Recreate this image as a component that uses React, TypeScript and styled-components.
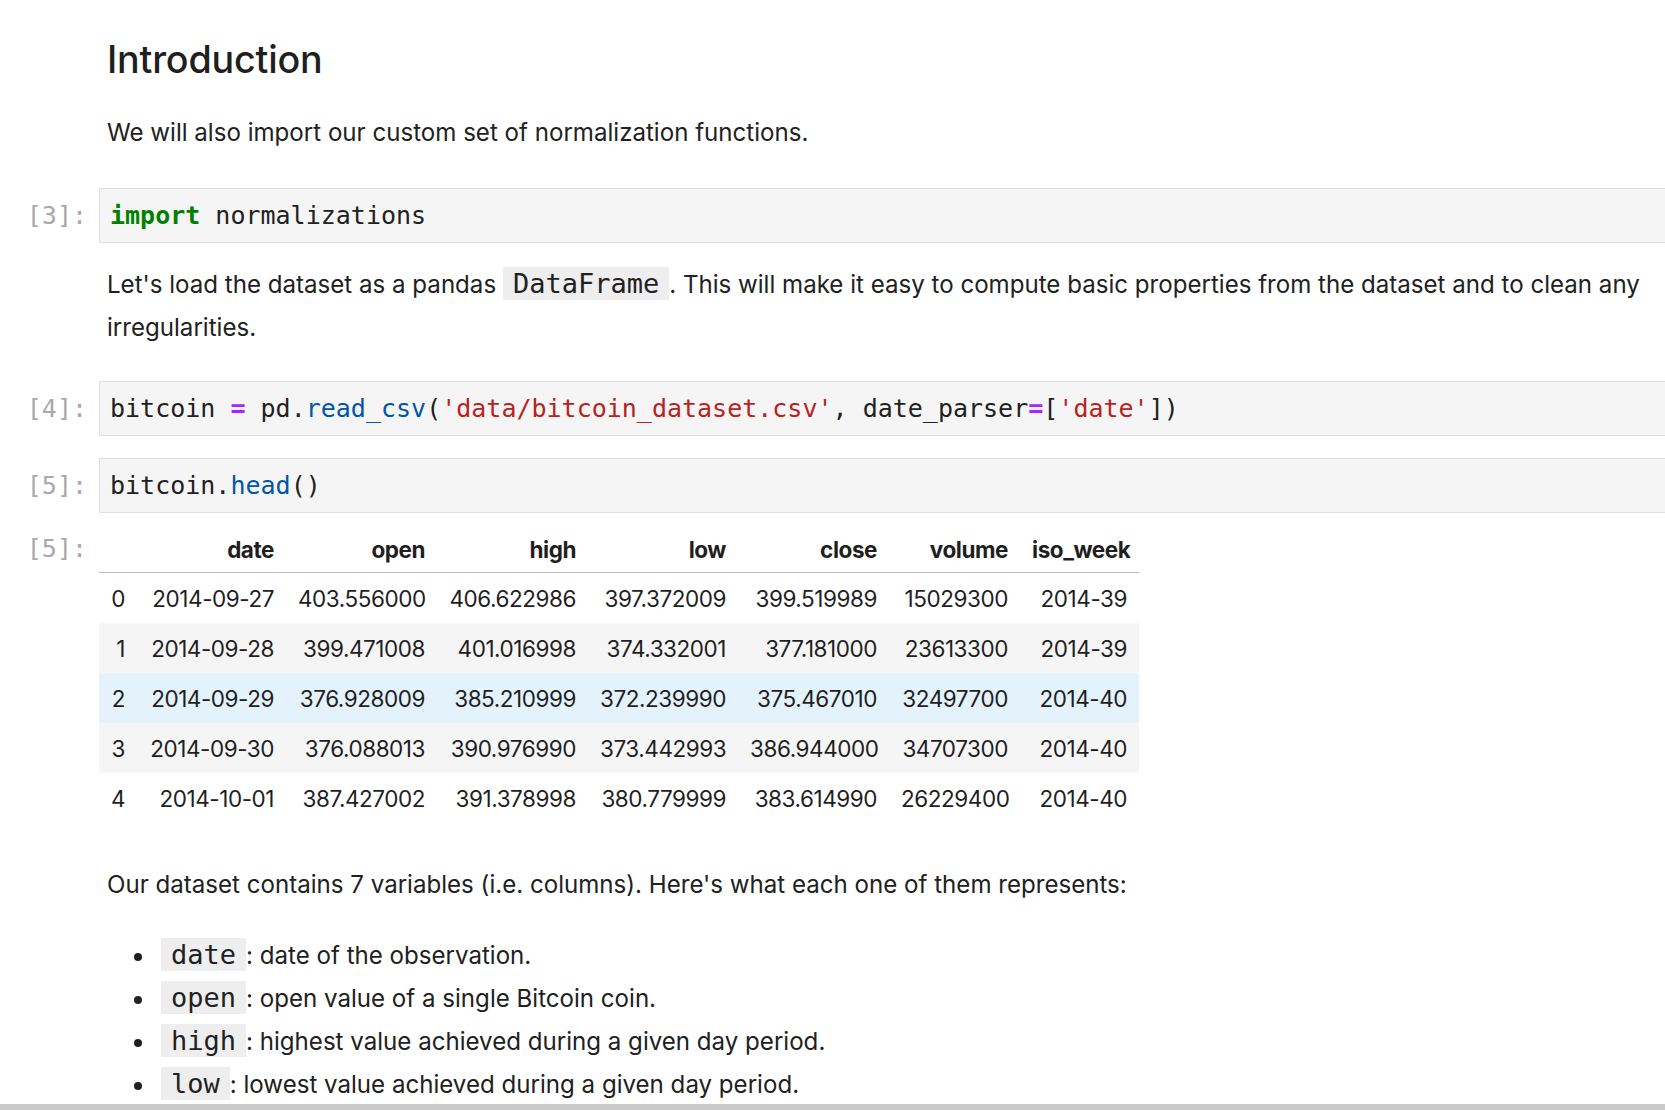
import React from "react";
import styled, { createGlobalStyle } from "styled-components";

const GlobalStyle = createGlobalStyle`
  html, body { margin: 0; padding: 0; background: #ffffff; }
  body {
    font-family: Inter, "Liberation Sans", Arial, sans-serif;
    color: #212121;
    -webkit-font-smoothing: antialiased;
  }
`;

const MONO = `"DejaVu Sans Mono", "Liberation Mono", monospace`;

const Page = styled.div`
  height: 1110px;
  display: flex;
  flex-direction: column;
  overflow: hidden;
`;

const Notebook = styled.main`
  flex: 1;
  width: 1720px;
  overflow: hidden;
  padding-top: 36px;
  box-sizing: border-box;
`;

const ScrollBar = styled.div`
  flex: none;
  height: 6px;
  background: #c9c9c9;
`;

const Cell = styled.section<{ $gap: number; $align?: string }>`
  display: flex;
  align-items: ${(p) => p.$align || "flex-start"};
  margin-top: ${(p) => p.$gap}px;
`;

const Prompt = styled.div<{ $lh?: number }>`
  flex: none;
  width: 99px;
  box-sizing: border-box;
  padding-right: 12px;
  text-align: right;
  font-family: ${MONO};
  font-size: 25px;
  line-height: ${(p) => p.$lh || 31}px;
  color: #a9a9a9;
  white-space: pre;
`;

const Markdown = styled.div`
  flex: 1;
  padding-left: 8px;
`;

const Heading = styled.h2`
  margin: 0;
  font-size: 37.7px;
  font-weight: 500;
  line-height: 47px;
  letter-spacing: -0.2px;
  color: #1f1f1f;
`;

const Para = styled.p`
  margin: 0;
  font-size: 24.1px;
  line-height: 43px;
`;

const InlineCode = styled.code`
  font-family: ${MONO};
  font-size: 27px;
  line-height: 1;
  padding: 1px 10px;
  background: #eeeeee;
  color: #212121;
`;

const CodeBox = styled.div`
  flex: 1;
  background: #f5f5f5;
  border: 1px solid #e0e0e0;
  padding: 11px 10px;
  font-family: ${MONO};
  font-size: 25px;
  line-height: 31px;
  color: #212121;
  white-space: pre;
`;

const Kw = styled.span`
  color: #008000;
  font-weight: bold;
`;
const Op = styled.span`
  color: #aa22ff;
  font-weight: bold;
`;
const Prop = styled.span`
  color: #0055aa;
`;
const Str = styled.span`
  color: #ba2121;
`;

const DataTable = styled.table`
  border-collapse: collapse;
  table-layout: fixed;
  width: 1040px;
  font-size: 22.5px;
  letter-spacing: -0.45px;
  color: #1f1f1f;
`;

const HeadCell = styled.th`
  height: 46px;
  padding: 0 12px;
  text-align: right;
  font-weight: 700;
  vertical-align: middle;
  border-bottom: 1px solid #bdbdbd;
  white-space: nowrap;
`;

const BodyRow = styled.tr<{ $tone: "plain" | "stripe" | "hover" }>`
  height: 50px;
  background: ${(p) =>
    p.$tone === "hover" ? "#e3f2fb" : p.$tone === "stripe" ? "#f5f5f5" : "#ffffff"};
`;

const ValueCell = styled.td`
  padding: 1px 12px 0;
  text-align: right;
  vertical-align: middle;
  white-space: nowrap;
`;

const IndexCell = styled(ValueCell)`
  font-weight: 400;
`;

const List = styled.ul`
  margin: 0;
  padding: 0 0 0 54px;
  list-style: none;
`;

const Item = styled.li`
  font-size: 24.1px;
  line-height: 43px;
  display: flex;
  align-items: baseline;
  white-space: nowrap;
  &::before {
    content: "";
    flex: none;
    align-self: center;
    width: 8px;
    height: 8px;
    border-radius: 50%;
    background: #212121;
    margin-left: -27px;
    margin-right: 19px;
    margin-top: 3px;
  }
`;

const columns = ["", "date", "open", "high", "low", "close", "volume", "iso_week"];
const widths = [38, 149, 151, 151, 150, 151, 131, 119];

const rows: string[][] = [
  ["0", "2014-09-27", "403.556000", "406.622986", "397.372009", "399.519989", "15029300", "2014-39"],
  ["1", "2014-09-28", "399.471008", "401.016998", "374.332001", "377.181000", "23613300", "2014-39"],
  ["2", "2014-09-29", "376.928009", "385.210999", "372.239990", "375.467010", "32497700", "2014-40"],
  ["3", "2014-09-30", "376.088013", "390.976990", "373.442993", "386.944000", "34707300", "2014-40"],
  ["4", "2014-10-01", "387.427002", "391.378998", "380.779999", "383.614990", "26229400", "2014-40"],
];

const tones: Array<"plain" | "stripe" | "hover"> = ["plain", "stripe", "hover", "stripe", "plain"];

const variables = [
  ["date", "date of the observation."],
  ["open", "open value of a single Bitcoin coin."],
  ["high", "highest value achieved during a given day period."],
  ["low", "lowest value achieved during a given day period."],
];

export default function App() {
  return (
    <Page>
      <GlobalStyle />
      <Notebook>
        <Cell $gap={0}>
          <Prompt />
          <Markdown>
            <Heading>Introduction</Heading>
          </Markdown>
        </Cell>
        <Cell $gap={28}>
          <Prompt />
          <Markdown>
            <Para>We will also import our custom set of normalization functions.</Para>
          </Markdown>
        </Cell>
        <Cell $gap={34} $align="center">
          <Prompt>[3]:</Prompt>
          <CodeBox>
            <Kw>import</Kw> normalizations
          </CodeBox>
        </Cell>
        <Cell $gap={20}>
          <Prompt />
          <Markdown>
            <Para>
              Let's load the dataset as a pandas <InlineCode>DataFrame</InlineCode>. This will make it
              easy to compute basic properties from the dataset and to clean any
              <br />
              irregularities.
            </Para>
          </Markdown>
        </Cell>
        <Cell $gap={32} $align="center">
          <Prompt>[4]:</Prompt>
          <CodeBox>
            bitcoin <Op>=</Op> pd.<Prop>read_csv</Prop>(<Str>'data/bitcoin_dataset.csv'</Str>, date_parser
            <Op>=</Op>[<Str>'date'</Str>])
          </CodeBox>
        </Cell>
        <Cell $gap={22} $align="center">
          <Prompt>[5]:</Prompt>
          <CodeBox>
            bitcoin.<Prop>head</Prop>()
          </CodeBox>
        </Cell>
        <Cell $gap={13}>
          <Prompt $lh={46}>[5]:</Prompt>
          <DataTable>
            <colgroup>
              {widths.map((w, i) => (
                <col key={i} style={{ width: w }} />
              ))}
            </colgroup>
            <thead>
              <tr>
                {columns.map((c, i) => (
                  <HeadCell key={i}>{c}</HeadCell>
                ))}
              </tr>
            </thead>
            <tbody>
              {rows.map((r, ri) => (
                <BodyRow key={ri} $tone={tones[ri]}>
                  {r.map((v, ci) =>
                    ci === 0 ? (
                      <IndexCell key={ci}>{v}</IndexCell>
                    ) : (
                      <ValueCell key={ci}>{v}</ValueCell>
                    )
                  )}
                </BodyRow>
              ))}
            </tbody>
          </DataTable>
        </Cell>
        <Cell $gap={40}>
          <Prompt />
          <Markdown>
            <Para>
              Our dataset contains 7 variables (i.e. columns). Here's what each one of them represents:
            </Para>
          </Markdown>
        </Cell>
        <Cell $gap={28}>
          <Prompt />
          <Markdown>
            <List>
              {variables.map(([code, text]) => (
                <Item key={code}>
                  <span>
                    <InlineCode>{code}</InlineCode>: {text}
                  </span>
                </Item>
              ))}
            </List>
          </Markdown>
        </Cell>
      </Notebook>
      <ScrollBar />
    </Page>
  );
}
